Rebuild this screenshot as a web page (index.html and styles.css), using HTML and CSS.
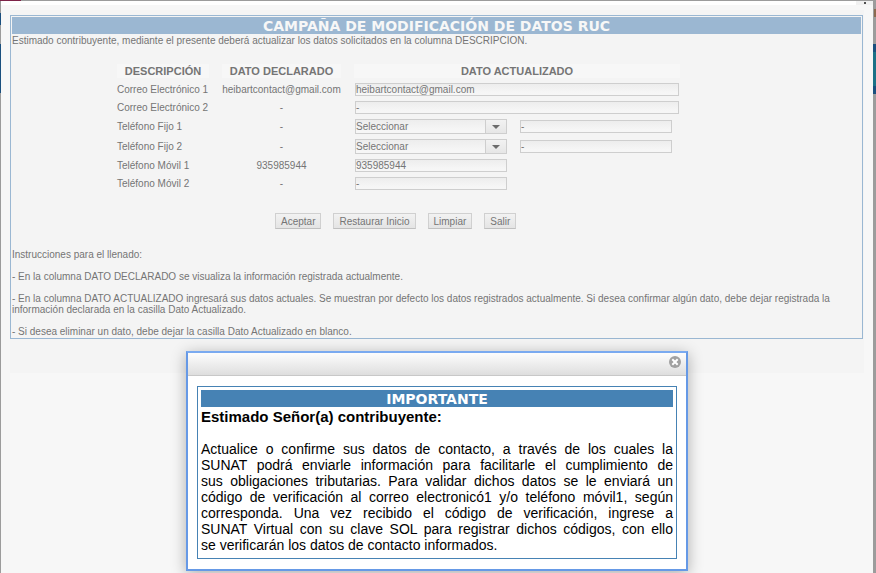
FILE: index.html
```html
<!DOCTYPE html>
<html lang="es">
<head>
<meta charset="utf-8">
<title>Campaña de modificación de datos RUC</title>
<link rel="stylesheet" href="styles.css">
</head>
<body>
<div class="frame">
  <div class="frame-top"><span class="scroll-corner"><span class="scroll-tick"></span></span></div>
  <main class="content">
    <form class="panel">
      <h1 class="bar">CAMPAÑA DE MODIFICACIÓN DE DATOS RUC</h1>
      <p class="intro">Estimado contribuyente, mediante el presente deberá actualizar los datos solicitados en la columna DESCRIPCION.</p>
      <table class="data">
        <thead>
          <tr><th class="col-desc">DESCRIPCIÓN</th><th class="col-old">DATO DECLARADO</th><th class="col-new">DATO ACTUALIZADO</th></tr>
        </thead>
        <tbody>
          <tr><td><label for="mail1">Correo Electrónico 1</label></td><td class="old">heibartcontact@gmail.com</td><td><div class="fields"><input class="field wide" id="mail1" type="text" value="heibartcontact@gmail.com"></div></td></tr>
          <tr><td><label for="mail2">Correo Electrónico 2</label></td><td class="old">-</td><td><div class="fields"><input class="field wide" id="mail2" type="text" value="-"></div></td></tr>
          <tr><td><label for="area1">Teléfono Fijo 1</label></td><td class="old">-</td><td><div class="fields"><span class="combo"><select id="area1"><option>Seleccionar</option></select></span><input class="field" type="text" value="-" aria-label="Número de teléfono fijo 1"></div></td></tr>
          <tr><td><label for="area2">Teléfono Fijo 2</label></td><td class="old">-</td><td><div class="fields"><span class="combo"><select id="area2"><option>Seleccionar</option></select></span><input class="field" type="text" value="-" aria-label="Número de teléfono fijo 2"></div></td></tr>
          <tr><td><label for="mobile1">Teléfono Móvil 1</label></td><td class="old">935985944</td><td><div class="fields"><input class="field" id="mobile1" type="text" value="935985944"></div></td></tr>
          <tr><td><label for="mobile2">Teléfono Móvil 2</label></td><td class="old">-</td><td><div class="fields"><input class="field" id="mobile2" type="text" value="-"></div></td></tr>
        </tbody>
      </table>
      <div class="actions">
        <button type="button">Aceptar</button>
        <button type="button">Restaurar Inicio</button>
        <button type="button">Limpiar</button>
        <button type="button">Salir</button>
      </div>
      <div class="help">
        <p>Instrucciones para el llenado:</p>
        <p>- En la columna DATO DECLARADO se visualiza la información registrada actualmente.</p>
        <p>- En la columna DATO ACTUALIZADO ingresará sus datos actuales. Se muestran por defecto los datos registrados actualmente. Si desea confirmar algún dato, debe dejar registrada la información declarada en la casilla Dato Actualizado.</p>
        <p>- Si desea eliminar un dato, debe dejar la casilla Dato Actualizado en blanco.</p>
      </div>
    </form>
  </main>
</div>
<section class="dialog" role="dialog" aria-labelledby="dialog-title">
  <header class="dialog-head">
    <button class="close" type="button" aria-label="Cerrar">
      <svg width="12" height="12" viewBox="0 0 12 12"><circle cx="6" cy="6" r="6" fill="#a1a1a1"/><path d="M3.3 3.3l5.4 5.4M8.7 3.3L3.3 8.7" stroke="#fff" stroke-width="2"/></svg>
    </button>
  </header>
  <div class="notice">
    <h2 class="bar" id="dialog-title">IMPORTANTE</h2>
    <p class="greeting">Estimado Señor(a) contribuyente:</p>
    <p class="message">Actualice o confirme sus datos de contacto, a través de los cuales la<br>
      SUNAT podrá enviarle información para facilitarle el cumplimiento de<br>
      sus obligaciones tributarias. Para validar dichos datos se le enviará un<br>
      código de verificación al correo electronicó1 y/o teléfono móvil1, según<br>
      corresponda. Una vez recibido el código de verificación, ingrese a<br>
      SUNAT Virtual con su clave SOL para registrar dichos códigos, con ello
      <span class="message-end">se verificarán los datos de contacto informados.</span></p>
  </div>
</section>
</body>
</html>
```
FILE: styles.css
```css
* { box-sizing: border-box; }

html { background: #9c9c9c; }

body {
  margin: 0;
  min-height: 100vh;
  padding: 1px 3px 0 1px;
  font: 10px/11px "Liberation Sans", Arial, sans-serif;
  color: #757575;
  background:
    linear-gradient(#7d2348, #7d2348) 0 0 / 21px 1px no-repeat,
    linear-gradient(#8c6a50, #8c6a50) right 9px / 2px 8px no-repeat,
    linear-gradient(#1c7187, #1c7187) right 52px / 3px 34px no-repeat,
    linear-gradient(#1a4f7e, #1a4f7e) right 44px / 3px 50px no-repeat,
    linear-gradient(#1a4f7e, #1a4f7e) 0 13px / 1px 12px no-repeat,
    linear-gradient(#1a4f7e, #1a4f7e) 0 44px / 1px 49px no-repeat,
    #9c9c9c;
}

h1, h2, p { margin: 0; }

.frame {
  min-height: calc(100vh - 1px);
  background: #f7f7f7;
}

.frame-top {
  display: flex;
  justify-content: flex-end;
  height: 4px;
  background: #fff;
}

.scroll-corner {
  display: flex;
  justify-content: center;
  width: 17px;
  padding-top: 1px;
  background: #f1f1f1;
}

.scroll-tick {
  width: 2px;
  height: 2px;
  background: #505050;
}

.content {
  margin: 5px 9px 0;
  padding: 5px 1px 34px 0;
  background: #f4f4f4;
}

.panel {
  padding: 1px;
  border: 1px solid #9ab7d2;
}

.bar {
  height: 17px;
  font: bold 14px/19px "DejaVu Sans", Verdana, sans-serif;
  text-align: center;
  color: #f7f7f7;
  background: #9bb7d2;
}

.intro { margin-top: 1px; }

.data {
  margin: 13px 0 0 92px;
  border-spacing: 13px 5px;
}

.data th {
  height: 14px;
  padding: 0;
  font-size: 11px;
  line-height: 14px;
  background: #f7f7f7;
}

.data td { padding: 0; white-space: nowrap; }
.col-desc { width: 92px; }
.col-old { width: 119px; }
.col-new { width: 326px; }
.old { text-align: center; }

.fields {
  display: flex;
  align-items: center;
  gap: 13px;
  padding: 0 1px;
}

.field {
  width: 152px;
  height: 13px;
  padding: 0;
  border: 1px solid #cecece;
  border-radius: 0;
  font: inherit;
  color: inherit;
  background: linear-gradient(#ededed, #f6f6f6 80%);
}

.field.wide { width: 324px; }

.combo {
  position: relative;
  display: flex;
  width: 152px;
  height: 15px;
}

.combo select {
  appearance: none;
  width: 100%;
  padding: 0 22px 0 0;
  border: 1px solid #cecece;
  border-radius: 0;
  font: inherit;
  color: inherit;
  background:
    linear-gradient(#cecece, #cecece) right 20px top / 1px 100% no-repeat,
    linear-gradient(#f2f2f2, #e6e6e6) right / 20px 100% no-repeat,
    linear-gradient(#ededed, #f6f6f6 80%);
}

.combo::after {
  content: "";
  position: absolute;
  top: 6px;
  right: 7px;
  border: 4px solid transparent;
  border-top-color: #6c6c6c;
  border-bottom: 0;
  pointer-events: none;
}

.actions {
  display: flex;
  gap: 12px;
  margin: 18px 0 0 263px;
}

.actions button {
  height: 16px;
  padding: 0 5px;
  border: 1px solid #d0d0d0;
  border-bottom-color: #c0c0c0;
  font: inherit;
  color: inherit;
  background: linear-gradient(#f2f2f2, #e4e4e4);
}

.help { margin-top: 20px; }
.help p + p { margin-top: 11px; }

.dialog {
  position: absolute;
  top: 351px;
  left: 0;
  right: 2px;
  width: 502px;
  margin: 0 auto;
  border: 2px solid #6699e6;
  border-top-color: #7aaaf0;
  background: #fff;
  color: #000;
  box-shadow: 0 3px 14px rgba(0, 0, 0, 0.3);
}

.dialog-head {
  display: flex;
  justify-content: flex-end;
  height: 23px;
  padding: 3px 5px;
  border-bottom: 1px solid #c8c8c8;
  background: linear-gradient(#fdfdfd, #dedede);
}

.close {
  display: flex;
  align-self: flex-start;
  padding: 0;
  border: 0;
  background: none;
}

.notice {
  margin: 10px 9px;
  padding: 3px;
  border: 1px solid #4682b4;
}

.notice .bar { color: #fff; background: #4682b4; }

.greeting,
.message {
  font-size: 14px;
  line-height: 16px;
}

.greeting { margin: 2px 0 16px; font-size: 15px; font-weight: bold; }

.message {
  padding-bottom: 2px;
  text-align: justify;
  text-align-last: justify;
}

.message-end {
  display: block;
  text-align-last: left;
}
```
